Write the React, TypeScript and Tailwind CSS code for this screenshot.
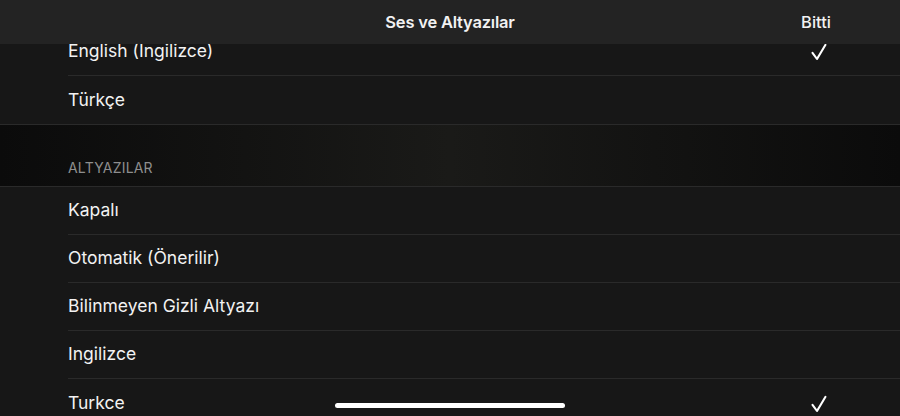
const audio = [
  { label: 'English (Ingilizce)', checked: true },
  { label: 'Türkçe', checked: false },
];

const subtitles = [
  { label: 'Kapalı', checked: false },
  { label: 'Otomatik (Önerilir)', checked: false },
  { label: 'Bilinmeyen Gizli Altyazı', checked: false },
  { label: 'Ingilizce', checked: false },
  { label: 'Turkce', checked: true },
];

function Checkmark() {
  return (
    <svg width="18" height="18" viewBox="0 0 18 18" fill="none" className="mt-[1px]">
      <path
        d="M2.5 9.8 L7 16 L15.5 1.8"
        stroke="white"
        strokeWidth="2.1"
        strokeLinecap="round"
        strokeLinejoin="round"
      />
    </svg>
  );
}

function Row({ label, checked, last }: { label: string; checked: boolean; last?: boolean }) {
  return (
    <div className="flex h-12 items-stretch pl-[68px]">
      <div
        className={`flex flex-1 items-center justify-between pr-[72px] ${
          last ? '' : 'border-b border-[#2a2a2a]'
        }`}
      >
        <span className="text-[17.5px] text-[#f2f2f2]">{label}</span>
        {checked && <Checkmark />}
      </div>
    </div>
  );
}

export default function App() {
  return (
    <div
      className="relative h-[416px] w-[900px] overflow-hidden bg-[#171717]"
      style={{ fontFamily: 'Inter, "Noto Sans", sans-serif' }}
    >
      {/* Header */}
      <div className="absolute inset-x-0 top-0 z-10 flex h-[44px] items-center justify-center bg-[#242424]/95">
        <span className="text-[16.5px] font-semibold tracking-[-0.2px] text-[#f2f2f2]">
          Ses ve Altyazılar
        </span>
        <span className="absolute right-[69px] text-[16.5px] font-medium text-[#f2f2f2]">Bitti</span>
      </div>

      <div className="pt-[28px]">
        {audio.map((r, i) => (
          <Row key={r.label} label={r.label} checked={r.checked} last={i === audio.length - 1} />
        ))}

        <div className="flex h-[63px] items-end border-y border-[#2a2a2a] bg-gradient-to-r from-[#0b0b0b] via-[#1a1a18] to-[#0b0b0b] pb-[8px] pl-[68px]">
          <span className="text-[14px] tracking-[0.2px] text-[#8e8e8e]">ALTYAZILAR</span>
        </div>

        {subtitles.map((r, i) => (
          <Row key={r.label} label={r.label} checked={r.checked} last={i === subtitles.length - 1} />
        ))}
      </div>

      {/* Home indicator */}
      <div className="absolute bottom-[8px] left-[335px] h-[5px] w-[230px] rounded-full bg-white" />
    </div>
  );
}
